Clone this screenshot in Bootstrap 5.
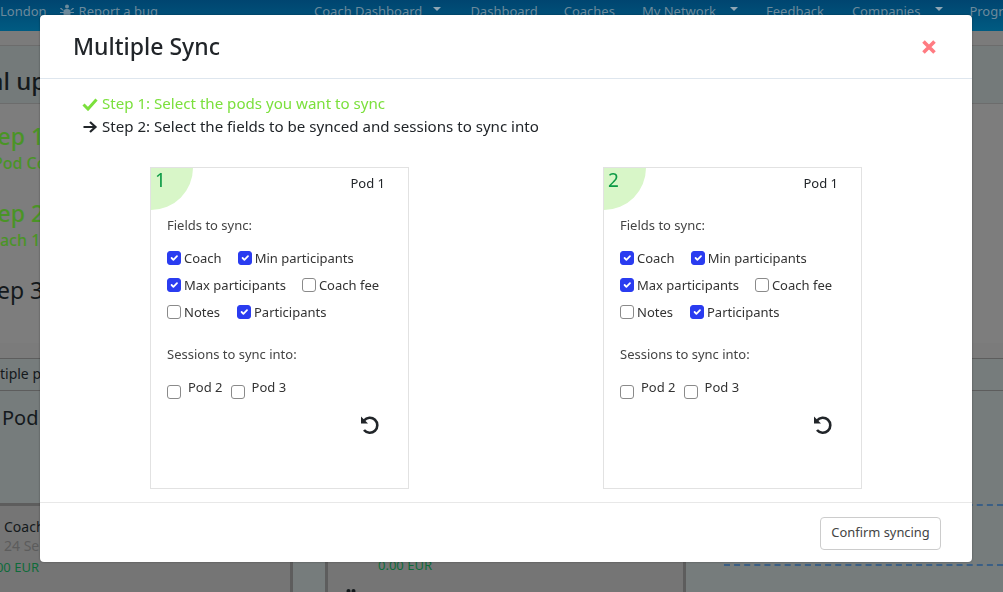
<!DOCTYPE html>
<html lang="en">
<head>
<meta charset="UTF-8" />
<title>Multiple Sync</title>
<link href="https://cdn.jsdelivr.net/npm/bootstrap@5.3.0/dist/css/bootstrap.min.css" rel="stylesheet" />
<style>
  /* the page behind the dialog is painted in its already dimmed colours */
  body { font-family: "Noto Sans", "Liberation Sans", sans-serif; height: 592px; overflow: hidden; background: #7b7b7b; color: #14191c; }
  .topnav { height: 31px; background: linear-gradient(#004570, #005b82); color: #6c8a9c; font-size: 13px; line-height: 22px; white-space: nowrap; overflow: hidden; }
  .topnav span { display: block; flex: none; }
  .topnav svg { flex: none; margin: 4px 5px 0 13px; }
  .caret-down { width: 0; height: 0; border: 4px solid transparent; border-top-color: #8fa6b4; border-bottom: 0; margin-top: 7px; flex: none; }
  .gap-11 { margin-left: 11px; }
  .gap-14 { margin-left: 14px; }
  .gap-15 { margin-left: 15px; }
  .gap-26 { margin-left: 26px; }
  .gap-27 { margin-left: 27px; }
  .gap-28 { margin-left: 28px; }
  .gap-29 { margin-left: 29px; }
  .gap-156 { margin-left: 156px; }
  .band-thin { height: 15px; background: #7b7b7b; border-bottom: 1px solid #6c6c6c; }
  .band-title { height: 58px; background: #747a7a; border-bottom: 1px solid #6c6c6c; font-size: 24px; font-weight: 500; padding-top: 21px; margin: 0; white-space: nowrap; }
  .band-title span { display: block; margin-left: -76px; }
  .steps-area { height: 239px; background: #7d7d7d; white-space: nowrap; padding-top: 15px; }
  .step-head { font-size: 23px; margin-left: -24px; line-height: 34px; }
  .step-sub { font-size: 16px; line-height: 20px; margin-bottom: 23px; }
  .sub-pod { margin-left: -7px; }
  .sub-coach { margin-left: -20px; }
  .step-ok { color: #4a9426; font-weight: 500; }
  .pods-area { background: #767c7c; height: 250px; }
  .pods-strip { margin-top: 15px; height: 33px; border-top: 1px solid #5d5d5d; border-bottom: 1px solid #5d5d5d; font-size: 14px; line-height: 30px; white-space: nowrap; }
  .pods-strip span { display: block; margin-left: -25px; }
  .pod-name { font-size: 20px; line-height: 28px; margin: 13px 0 71px 2px; }
  .bg-slot { height: 100px; background: #757575; border: 3px solid #5d5d5d; border-bottom: 0; font-size: 14px; line-height: 19px; flex: none; }
  .slot-a { width: 293px; border-left: 0; padding: 11px 0 0 4px; }
  .slot-b { width: 361px; margin-left: 32px; padding: 50px 0 0 50px; }
  .slot-date { color: #5c5c5c; }
  .slot-eur { color: #0e6b3a; font-size: 13px; }
  .slot-a .slot-eur { margin-left: -19px; line-height: 24px; }
  .slot-b svg { display: block; margin: 14px 0 0 -32px; }
  .slot-dash { flex: 1; margin: 1px 0 0 38px; height: 62px; border-top: 2px dashed #3a5f86; border-bottom: 2px dashed #3a5f86; }

  .modal-dialog.sync-dialog { max-width: none; width: 932px; margin: 15px 0 0 40px; }
  .sync-dialog .modal-content { height: 547px; border-radius: 4px; border: 0; box-shadow: 0 0 2px rgba(0,0,0,.4); }
  .sync-dialog .modal-header { height: 64px; padding: 0 33px; border-bottom: 1px solid #dee6ee; }
  .sync-dialog .modal-title { font-size: 23px; font-weight: 500; color: #212529; }
  .close-mark { margin-right: 2px; }
  .sync-dialog .modal-body { padding: 13px 13px 0; }
  .step-line { font-size: 15.100px; line-height: 23px; margin-left: 29px; color: #212529; }
  .step-line svg { flex: none; }
  .step-done { color: #7be03c; }
  .pod-col { width: 453px; }
  .pod-card { width: 259px; height: 322px; margin-top: 29px; border: 1px solid #e2e2e2; padding: 0 16px; position: relative; font-size: 13px; color: #333; }
  .pod-corner { width: 42px; height: 42px; background: #d8f6c8; border-bottom-right-radius: 42px; position: absolute; left: 0; top: 0; color: #0c9a45; font-size: 19px; line-height: 25px; padding-left: 4px; }
  .pod-label { text-align: right; padding-right: 7px; line-height: 18px; margin-top: 6px; color: #212529; }
  .sec-label { color: #444; line-height: 18px; margin-top: 24px; }
  .sec-into { margin-top: 19px; }
  .pick-row { height: 27px; }
  .pick-first { margin-top: 11px; }
  .sync-dialog .form-check-input { width: 14px; height: 14px; margin: 0 3px 2px 0; flex: none; border-color: #8a8a8a; border-radius: 3px; }
  .sync-dialog .form-check-input:checked { background-color: #2a3cf0; border-color: #2a3cf0; }
  .pick-item { display: flex; align-items: center; }
  .pick-next { margin-left: 16px; }
  .pick-wide { margin-left: 17px; }
  .into-row { margin-top: 15px; gap: 8px; }
  .into-item { display: flex; }
  .sync-dialog .into-item input { margin-top: 7px; margin-bottom: 0; }
  .into-item span { margin-left: 4px; }
  .undo-wrap { text-align: right; padding-right: 12px; margin-top: 15px; }
  .sync-dialog .modal-footer { height: 60px; padding: 1px 31px 0; border-top: 1px solid #e8e8e8; }
  .confirm-btn { font-size: 12.900px; color: #444; border: 1px solid #ccc; background: #fff; border-radius: 4px; width: 121px; height: 33px; padding: 0; margin: 0; }
</style>
</head>
<body>

<nav class="topnav d-flex">
  <span>London</span>
  <svg width="14" height="14" viewBox="0 0 14 14" fill="#6c8a9c"><circle cx="7" cy="2.500" r="2"/><rect x="3.500" y="5" width="7" height="8" rx="3"/><path d="M0 4h1.500l2 2v1l-3-2zM14 4h-1.500l-2 2v1l3-2zM0 8h4v1H0zM10 8h4v1h-4z"/></svg>
  <span>Report a bug</span>
  <span class="gap-156">Coach Dashboard</span><i class="caret-down gap-11"></i>
  <span class="gap-29">Dashboard</span>
  <span class="gap-26">Coaches</span>
  <span class="gap-27">My Network</span><i class="caret-down gap-14"></i>
  <span class="gap-28">Feedback</span>
  <span class="gap-28">Companies</span><i class="caret-down gap-15"></i>
  <span class="gap-26">Programs</span>
</nav>
<div class="band-thin"></div>
<h2 class="band-title"><span>Manual update</span></h2>
<div class="steps-area">
  <div class="step-head step-ok">Step 1:</div>
  <div class="step-sub step-ok sub-pod">Pod Coach</div>
  <div class="step-head step-ok">Step 2:</div>
  <div class="step-sub step-ok sub-coach">Coach 10</div>
  <div class="step-head">Step 3:</div>
</div>
<div class="pods-area">
  <div class="pods-strip"><span>Multiple pods</span></div>
  <div class="pod-name">Pod</div>
  <div class="d-flex">
    <div class="bg-slot slot-a">
      <div>Coach</div>
      <div class="slot-date">24 Sep</div>
      <div class="slot-eur">0.00 EUR</div>
    </div>
    <div class="bg-slot slot-b">
      <div class="slot-eur">0.00 EUR</div>
      <svg width="10" height="8" viewBox="0 0 10 8" fill="#14191c"><circle cx="2.500" cy="2" r="2"/><circle cx="7.500" cy="2" r="2"/></svg>
    </div>
    <div class="slot-dash"></div>
  </div>
</div>

<div class="modal d-block" tabindex="-1">
  <div class="modal-dialog sync-dialog">
    <div class="modal-content">
      <div class="modal-header">
        <h5 class="modal-title">Multiple Sync</h5>
        <svg class="ms-auto close-mark" width="16" height="16" viewBox="0 0 16 16"><path d="M2.500 2.500l11 11M13.500 2.500l-11 11" stroke="#ff7b82" stroke-width="3.600"/></svg>
      </div>
      <div class="modal-body">
        <div class="step-line step-done d-flex align-items-center gap-1">
          <svg width="16" height="14" viewBox="0 0 16 14"><path d="M1.500 7.500l4.500 4.500 8.500-9.500" fill="none" stroke="#7be03c" stroke-width="3"/></svg>
          <span>Step 1: Select the pods you want to sync</span>
        </div>
        <div class="step-line d-flex align-items-center gap-1">
          <svg width="16" height="14" viewBox="0 0 16 14"><path d="M1.500 7h12M8 2l5.500 5-5.500 5" fill="none" stroke="#212529" stroke-width="2.200"/></svg>
          <span>Step 2: Select the fields to be synced and sessions to sync into</span>
        </div>
        <div class="d-flex">
          <div class="pod-col d-flex justify-content-center" id="podA"></div>
          <div class="pod-col d-flex justify-content-center" id="podB"></div>
        </div>
      </div>
      <div class="modal-footer">
        <button type="button" class="btn confirm-btn">Confirm syncing</button>
      </div>
    </div>
  </div>
</div>

<template id="podTpl">
  <div class="pod-card">
    <div class="pod-corner"></div>
    <div class="pod-label">Pod 1</div>
    <div class="sec-label">Fields to sync:</div>
    <div class="pick-row pick-first d-flex align-items-center">
      <label class="pick-item"><input class="form-check-input" type="checkbox" checked />Coach</label>
      <label class="pick-item pick-next"><input class="form-check-input" type="checkbox" checked />Min participants</label>
    </div>
    <div class="pick-row d-flex align-items-center">
      <label class="pick-item"><input class="form-check-input" type="checkbox" checked />Max participants</label>
      <label class="pick-item pick-next"><input class="form-check-input" type="checkbox" />Coach fee</label>
    </div>
    <div class="pick-row d-flex align-items-center">
      <label class="pick-item"><input class="form-check-input" type="checkbox" />Notes</label>
      <label class="pick-item pick-wide"><input class="form-check-input" type="checkbox" checked />Participants</label>
    </div>
    <div class="sec-label sec-into">Sessions to sync into:</div>
    <div class="into-row d-flex">
      <label class="into-item"><input class="form-check-input" type="checkbox" /><span>Pod 2</span></label>
      <label class="into-item"><input class="form-check-input" type="checkbox" /><span>Pod 3</span></label>
    </div>
    <div class="undo-wrap">
      <svg width="21" height="21" viewBox="0 0 21 21"><path d="M5 6.500A7.500 7.500 0 1 1 5 16" fill="none" stroke="#212529" stroke-width="2.600"/><path d="M2 2.500v7h7z" fill="#212529"/></svg>
    </div>
  </div>
</template>

<script src="https://cdn.jsdelivr.net/npm/bootstrap@5.3.0/dist/js/bootstrap.bundle.min.js"></script>
<script>
  // both pod cards share the same markup, only the number differs
  const tpl = document.getElementById("podTpl");
  [["podA", "1"], ["podB", "2"]].forEach(([id, num]) => {
    const node = tpl.content.cloneNode(true);
    node.querySelector(".pod-corner").textContent = num;
    document.getElementById(id).appendChild(node);
  });
</script>
</body>
</html>
